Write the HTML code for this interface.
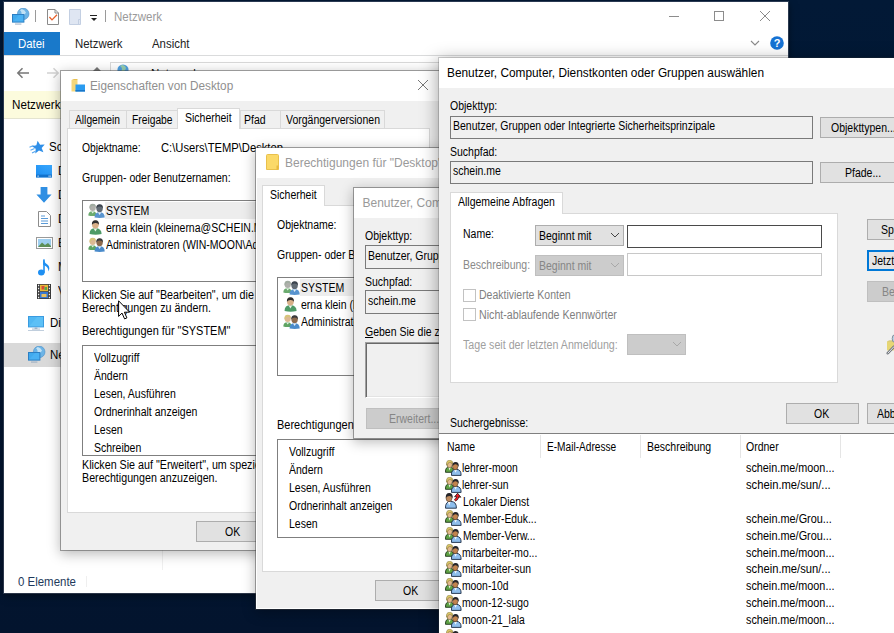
<!DOCTYPE html>
<html><head><meta charset="utf-8"><title>Netzwerk</title><style>
html,body{margin:0;padding:0}
body{width:894px;height:633px;overflow:hidden;position:relative;background:linear-gradient(180deg,#021936 0%,#03142e 100%);font-family:"Liberation Sans",sans-serif;}
.b{position:absolute;box-sizing:border-box;display:block}
.t{position:absolute;white-space:pre;transform-origin:0 0;}
</style></head><body>
<div class="b" style="left:4px;top:2px;width:784px;height:591px;background:#fff;box-shadow:0 0 0 1px rgba(120,130,150,.35),0 2px 8px rgba(0,0,0,.5);"></div>
<svg class="b" style="left:11.5px;top:7.5px;" width="18" height="17" viewBox="0 0 18 17">
<circle cx="11.2" cy="5.9" r="5.8" fill="#6db4e6"/>
<path d="M8 2.2 Q10.4 4.4 9.2 7 Q12.4 8.2 14 4.6 Q12.8 1.4 9.8 .9 Z" fill="#cfe9f7" opacity=".85"/>
<circle cx="11.2" cy="5.9" r="5.8" fill="none" stroke="#4a8fc8" stroke-width=".6"/>
<rect x=".5" y="6.5" width="11.4" height="7.6" fill="#49b1f3" stroke="#2c7fc4" stroke-width="1"/>
<path d="M1 13.6 L7 7 H1Z" fill="#3aa3ea" opacity=".6"/>
<rect x="3" y="15.6" width="6.4" height=".9" fill="#8fa6bd"/>
</svg>
<div class="b" style="left:35px;top:10px;width:1px;height:12px;background:#9a9a9a;"></div>
<svg class="b" style="left:46px;top:9px;" width="14" height="16" viewBox="0 0 14 16">
<path d="M1.5 .5 H9 L12.5 4 V15.5 H1.5 Z" fill="#fff" stroke="#8a8a8a" stroke-width="1"/>
<path d="M9 .5 V4 H12.5" fill="none" stroke="#8a8a8a" stroke-width="1"/>
<path d="M3.4 8 L6 10.9 L11 5.8" fill="none" stroke="#e8602a" stroke-width="1.3"/>
</svg>
<svg class="b" style="left:68px;top:9px;" width="14" height="16" viewBox="0 0 14 16">
<path d="M1.5 .5 H12.5 V15.5 H1.5 Z" fill="#dfe6f2" stroke="#c3cfe2" stroke-width="1"/>
<path d="M10.5 15 V10.5 H12.5" fill="none" stroke="#c3cfe2" stroke-width="1"/>
</svg>
<div class="b" style="left:90px;top:15px;width:7px;height:1px;background:#222;"></div>
<svg class="b" style="left:90px;top:17px;" width="8" height="5" viewBox="0 0 8 5"><path d="M1 1 H7 L4 4 Z" fill="#222"/></svg>
<div class="b" style="left:105px;top:10px;width:1px;height:12px;background:#9a9a9a;"></div>
<div class="t" style="left:113.5px;top:11.00px;font-size:12px;line-height:12px;color:#9a9a9a;transform:scaleX(0.96);">Netzwerk</div>
<div class="b" style="left:669px;top:16px;width:10px;height:1px;background:#8c8c8c;"></div>
<div class="b" style="left:714px;top:11px;width:10px;height:10px;border:1px solid #8c8c8c;"></div>
<svg class="b" style="left:759px;top:10px;" width="12" height="12" viewBox="0 0 12 12"><path d="M1 1 L11 11 M11 1 L1 11" stroke="#8a8a8a" stroke-width="1" fill="none"/></svg>
<div class="b" style="left:4px;top:32px;width:56px;height:23px;background:#1979ca;"></div>
<div class="t" style="left:18px;top:38.00px;font-size:12px;line-height:12px;color:#fff;transform:scaleX(0.95);">Datei</div>
<div class="t" style="left:74.5px;top:38.00px;font-size:12px;line-height:12px;color:#222;transform:scaleX(0.95);">Netzwerk</div>
<div class="t" style="left:151.5px;top:38.00px;font-size:12px;line-height:12px;color:#222;transform:scaleX(0.95);">Ansicht</div>
<svg class="b" style="left:750px;top:40px;" width="10" height="7" viewBox="0 0 10 7"><path d="M1 1 L5 5 L9 1" stroke="#8a8a8a" stroke-width="1.1" fill="none"/></svg>
<svg class="b" style="left:770px;top:36px;" width="14" height="14" viewBox="0 0 14 14"><circle cx="7" cy="7" r="6.8" fill="#1672d3"/><text x="7" y="11" font-family="Liberation Sans" font-weight="bold" font-size="11" fill="#fff" text-anchor="middle">?</text></svg>
<div class="b" style="left:4px;top:55px;width:784px;height:1px;background:#dadbdc;"></div>
<svg class="b" style="left:16px;top:67px;" width="14" height="12" viewBox="0 0 14 12"><path d="M13 6 H2 M6.5 1.2 L1.8 6 L6.5 10.8" stroke="#777" stroke-width="1.5" fill="none"/></svg>
<svg class="b" style="left:46px;top:67px;" width="14" height="12" viewBox="0 0 14 12"><path d="M1 6 H12 M7.5 1.2 L12.2 6 L7.5 10.8" stroke="#d2d2d2" stroke-width="1.5" fill="none"/></svg>
<div class="b" style="left:110px;top:62px;width:560px;height:23px;background:#fff;border:1px solid #d9d9d9;"></div>
<svg class="b" style="left:117px;top:64px;" width="12" height="12" viewBox="0 0 12 12"><circle cx="6" cy="6" r="5.6" fill="#4f9fe0"/><path d="M3 2 Q6 4 4.5 7 Q8 8 9 4 Q8 1 5 1Z" fill="#a8d8a0" opacity=".8"/></svg>
<div class="t" style="left:151px;top:68.00px;font-size:12px;line-height:12px;color:#000;transform:scaleX(0.96);">Netzwerk</div>
<svg class="b" style="left:92px;top:66px;" width="10" height="6" viewBox="0 0 10 6"><path d="M5 1 L9.5 5.5 H.5 Z" fill="#777"/></svg>
<div class="b" style="left:4px;top:91px;width:784px;height:27px;background:#fcfbdd;"></div>
<div class="b" style="left:4px;top:118px;width:784px;height:1px;background:#e4e4d0;"></div>
<div class="t" style="left:11.8px;top:99.00px;font-size:12px;line-height:12px;color:#000;transform:scaleX(0.97);">Netzwerk</div>
<div class="b" style="left:4px;top:343px;width:158px;height:23.6px;background:#d9d9d9;"></div>
<div class="b" style="left:162px;top:119px;width:1px;height:451px;background:#f0f0f0;"></div>
<svg class="b" style="left:29px;top:140px;" width="16" height="14" viewBox="0 0 16 14"><g transform="rotate(-8 9.5 7)"><path d="M9.5 .6 L11.4 5 L16 5.4 L12.5 8.4 L13.6 13 L9.5 10.5 L5.4 13 L6.5 8.4 L3 5.4 L7.6 5 Z" fill="#2f8fe8"/></g><path d="M.5 7.2 L4.5 5.6 M1.5 10.2 L5.5 8.6 M3 13 L6.5 11.2" stroke="#5aa9ef" stroke-width="1.1"/></svg>
<div class="t" style="left:49.3px;top:141.00px;font-size:12px;line-height:12px;color:#000;transform:scaleX(0.96);">Sc</div>
<svg class="b" style="left:36px;top:164.5px;" width="16" height="13" viewBox="0 0 16 13"><defs><linearGradient id="dg" x1="0" y1="1" x2="1" y2="0"><stop offset="0" stop-color="#1a8cf0"/><stop offset="1" stop-color="#3aa8ff"/></linearGradient></defs><rect x="0" y="0" width="16" height="12.4" fill="url(#dg)"/><rect x="0" y="9.6" width="16" height="2.8" fill="#1272cc"/><rect x="1.5" y="10.6" width="1.2" height="1" fill="#fff"/><rect x="12.5" y="10.6" width="1.2" height="1" fill="#fff"/><rect x="14.2" y="10.6" width="1" height="1" fill="#fff"/></svg>
<div class="t" style="left:57.7px;top:165.00px;font-size:12px;line-height:12px;color:#000;transform:scaleX(0.96);">D</div>
<svg class="b" style="left:36px;top:187px;" width="16" height="16" viewBox="0 0 16 16"><path d="M4.6 0 H11.4 V7.6 H15.6 L8 15.8 L.4 7.6 H4.6 Z" fill="#2f8fe3"/></svg>
<div class="t" style="left:58px;top:189.00px;font-size:12px;line-height:12px;color:#000;transform:scaleX(0.96);">D</div>
<svg class="b" style="left:38px;top:211px;" width="13" height="16" viewBox="0 0 13 16"><path d="M.5 .5 H8.5 L12.5 4.5 V15.5 H.5 Z" fill="#fff" stroke="#8c8c8c"/><path d="M3 5 H7 M3 7.5 H10 M3 10 H10 M3 12.5 H10" stroke="#5a9bd8" stroke-width="1"/></svg>
<div class="t" style="left:58px;top:213.00px;font-size:12px;line-height:12px;color:#000;transform:scaleX(0.96);">D</div>
<svg class="b" style="left:36px;top:237px;" width="17" height="12" viewBox="0 0 17 12"><rect x=".5" y=".5" width="16" height="11" fill="#fff" stroke="#9a9a9a"/><rect x="2" y="2" width="13" height="8" fill="#9ecff0"/><path d="M2 10 L6 5.5 L9 8 L12 6 L15 9 V10 Z" fill="#5d8f57"/></svg>
<div class="t" style="left:58px;top:237.00px;font-size:12px;line-height:12px;color:#000;transform:scaleX(0.96);">B</div>
<svg class="b" style="left:38px;top:258.5px;" width="12" height="17" viewBox="0 0 12 17"><ellipse cx="3.3" cy="13.5" rx="3.3" ry="2.9" fill="#1e8ff2"/><rect x="5.2" y=".4" width="1.6" height="13.4" fill="#1e8ff2"/><path d="M5.2 .4 Q7 4.2 10 6 Q12.4 8.6 10.4 12.6 Q10.6 8.4 6.6 6.6 L5.2 6 Z" fill="#1e8ff2"/></svg>
<div class="t" style="left:58px;top:261.00px;font-size:12px;line-height:12px;color:#000;transform:scaleX(0.96);">M</div>
<svg class="b" style="left:37px;top:284px;" width="14" height="15" viewBox="0 0 14 15"><rect x="0" y="0" width="14" height="15" fill="#3a3a3a"/><rect x="3" y=".8" width="8" height="6.4" fill="#e8b83a"/><rect x="3" y="7.8" width="8" height="6.4" fill="#3a78d0"/><rect x="4.5" y="2" width="3" height="3.5" fill="#d84a3a"/><rect x="7.5" y="3" width="2.5" height="3" fill="#5aa84a"/><rect x="4.5" y="10" width="5" height="3" fill="#e8c060"/><path d="M1 1.5h1.2M1 4.5h1.2M1 7.5h1.2M1 10.5h1.2M1 13.5h1.2M11.8 1.5h1.2M11.8 4.5h1.2M11.8 7.5h1.2M11.8 10.5h1.2M11.8 13.5h1.2" stroke="#f4f4f4" stroke-width="1.6"/></svg>
<div class="t" style="left:58px;top:285.00px;font-size:12px;line-height:12px;color:#000;transform:scaleX(0.96);">V</div>
<svg class="b" style="left:28px;top:316px;" width="16" height="15" viewBox="0 0 16 15"><rect x=".5" y=".5" width="15" height="10.4" fill="#5cc0f6" stroke="#3a9be0"/><path d="M1 10.4 L9 1 H1Z" fill="#49b2f2" opacity=".6"/><rect x="6.6" y="11.4" width="2.8" height="1.6" fill="#9fb3c8"/><rect x="4" y="12.6" width="8" height=".9" fill="#9fb3c8"/><rect x="0" y="14" width="16" height=".9" fill="#b9c9da"/></svg>
<div class="t" style="left:49.6px;top:317.00px;font-size:12px;line-height:12px;color:#000;transform:scaleX(0.96);">Di</div>
<svg class="b" style="left:28px;top:346.4px;" width="18" height="17" viewBox="0 0 18 17">
<circle cx="11.2" cy="5.9" r="5.8" fill="#6db4e6"/>
<path d="M8 2.2 Q10.4 4.4 9.2 7 Q12.4 8.2 14 4.6 Q12.8 1.4 9.8 .9 Z" fill="#cfe9f7" opacity=".85"/>
<circle cx="11.2" cy="5.9" r="5.8" fill="none" stroke="#4a8fc8" stroke-width=".6"/>
<rect x=".5" y="6.5" width="11.4" height="7.6" fill="#49b1f3" stroke="#2c7fc4" stroke-width="1"/>
<path d="M1 13.6 L7 7 H1Z" fill="#3aa3ea" opacity=".6"/>
<rect x="3" y="15.6" width="6.4" height=".9" fill="#8fa6bd"/>
</svg>
<div class="t" style="left:49.6px;top:349.00px;font-size:12px;line-height:12px;color:#000;transform:scaleX(0.96);">Ne</div>
<div class="t" style="left:18px;top:576.00px;font-size:12px;line-height:12px;color:#1e395b;transform:scaleX(0.955);">0 Elemente</div>
<div class="b" style="left:86px;top:576px;width:1px;height:11px;background:#efefef;"></div>
<div class="b" style="left:61px;top:71px;width:378px;height:479px;background:#f0f0f0;box-shadow:0 0 0 1px rgba(60,60,60,.46),0 3px 12px 1px rgba(0,0,0,.28);"></div>
<div class="b" style="left:61px;top:71px;width:378px;height:30px;background:#fff;"></div>
<svg class="b" style="left:71px;top:79px;" width="15" height="14" viewBox="0 0 15 14"><path d="M.5 1 H6.5 V12.5 H.5 Z" fill="#f5d77a"/><path d="M.5 1 L3 0 H6.5 V1Z" fill="#e8c050"/><rect x="4.5" y="5.5" width="9.5" height="7" fill="#2a9bf0"/><rect x="4.5" y="11" width="9.5" height="1.5" fill="#1976c8"/></svg>
<div class="t" style="left:90px;top:80.00px;font-size:12px;line-height:12px;color:#8f8f8f;transform:scaleX(0.98);">Eigenschaften von Desktop</div>
<svg class="b" style="left:417px;top:79px;" width="12" height="12" viewBox="0 0 12 12"><path d="M1 1 L11 11 M11 1 L1 11" stroke="#777" stroke-width="1" fill="none"/></svg>
<div class="b" style="left:67px;top:128px;width:363px;height:385px;background:#fff;border:1px solid #d9d9d9;"></div>
<div class="b" style="left:69px;top:110px;width:58px;height:19px;background:#f0f0f0;border:1px solid #d9d9d9;"></div>
<div class="t" style="left:75.2px;top:114.00px;font-size:12px;line-height:12px;color:#000;transform:scaleX(0.854);">Allgemein</div>
<div class="b" style="left:126px;top:110px;width:53px;height:19px;background:#f0f0f0;border:1px solid #d9d9d9;"></div>
<div class="t" style="left:132.3px;top:114.00px;font-size:12px;line-height:12px;color:#000;transform:scaleX(0.8552);">Freigabe</div>
<div class="b" style="left:240px;top:110px;width:41px;height:19px;background:#f0f0f0;border:1px solid #d9d9d9;"></div>
<div class="t" style="left:244.2px;top:114.00px;font-size:12px;line-height:12px;color:#000;transform:scaleX(0.875);">Pfad</div>
<div class="b" style="left:280px;top:110px;width:105px;height:19px;background:#f0f0f0;border:1px solid #d9d9d9;"></div>
<div class="t" style="left:286px;top:114.00px;font-size:12px;line-height:12px;color:#000;transform:scaleX(0.875);">Vorgängerversionen</div>
<div class="b" style="left:177px;top:108px;width:63px;height:21px;background:#fff;border:1px solid #d9d9d9;border-bottom:none;"></div>
<div class="t" style="left:185.3px;top:112.00px;font-size:12px;line-height:12px;color:#000;transform:scaleX(0.8733);">Sicherheit</div>
<div class="t" style="left:81.7px;top:142.00px;font-size:12px;line-height:12px;color:#000;transform:scaleX(0.8613);">Objektname:</div>
<div class="t" style="left:160.7px;top:142.00px;font-size:12px;line-height:12px;color:#000;transform:scaleX(0.9327);">C:\Users\TEMP\Desktop</div>
<div class="t" style="left:81.7px;top:172.00px;font-size:12px;line-height:12px;color:#000;transform:scaleX(0.877);">Gruppen- oder Benutzernamen:</div>
<div class="b" style="left:82px;top:200px;width:300px;height:82px;background:#fff;border:1px solid #7f7f7f;"></div>
<div class="b" style="left:105px;top:202px;width:276px;height:17px;background:#ededed;"></div>
<div class="t" style="left:106px;top:205.00px;font-size:12px;line-height:12px;color:#000;transform:scaleX(0.875);">SYSTEM</div>
<div class="t" style="left:106px;top:222.00px;font-size:12px;line-height:12px;color:#000;transform:scaleX(0.875);">erna klein (kleinerna@SCHEIN.ME)</div>
<div class="t" style="left:106px;top:239.00px;font-size:12px;line-height:12px;color:#000;transform:scaleX(0.875);">Administratoren (WIN-MOON\Administratoren)</div>
<div class="t" style="left:81.7px;top:289.00px;font-size:12px;line-height:12px;color:#000;transform:scaleX(0.8955);">Klicken Sie auf "Bearbeiten", um die</div>
<div class="t" style="left:81.7px;top:302.00px;font-size:12px;line-height:12px;color:#000;transform:scaleX(0.8945);">Berechtigungen zu ändern.</div>
<div class="t" style="left:81.7px;top:325.00px;font-size:12px;line-height:12px;color:#000;transform:scaleX(0.9127);">Berechtigungen für "SYSTEM"</div>
<div class="b" style="left:82px;top:345px;width:300px;height:111px;background:#fff;border:1px solid #7f7f7f;"></div>
<div class="t" style="left:93.7px;top:352.00px;font-size:12px;line-height:12px;color:#000;transform:scaleX(0.875);">Vollzugriff</div>
<div class="t" style="left:93.7px;top:370.00px;font-size:12px;line-height:12px;color:#000;transform:scaleX(0.875);">Ändern</div>
<div class="t" style="left:93.7px;top:388.00px;font-size:12px;line-height:12px;color:#000;transform:scaleX(0.875);">Lesen, Ausführen</div>
<div class="t" style="left:93.7px;top:406.00px;font-size:12px;line-height:12px;color:#000;transform:scaleX(0.875);">Ordnerinhalt anzeigen</div>
<div class="t" style="left:93.7px;top:424.00px;font-size:12px;line-height:12px;color:#000;transform:scaleX(0.875);">Lesen</div>
<div class="t" style="left:93.7px;top:442.00px;font-size:12px;line-height:12px;color:#000;transform:scaleX(0.875);">Schreiben</div>
<div class="t" style="left:81.7px;top:459.00px;font-size:12px;line-height:12px;color:#000;transform:scaleX(0.8944);">Klicken Sie auf "Erweitert", um spezielle</div>
<div class="t" style="left:81.7px;top:472.00px;font-size:12px;line-height:12px;color:#000;transform:scaleX(0.8908);">Berechtigungen anzuzeigen.</div>
<div class="b" style="left:196px;top:521px;width:75px;height:21px;background:#e1e1e1;border:1px solid #adadad;"></div>
<div class="t" style="left:224.5px;top:526.00px;font-size:12px;line-height:12px;color:#000;transform:scaleX(0.875);">OK</div>
<svg class="b" style="left:87.6px;top:202.6px;" width="17" height="15" viewBox="0 0 17 15"><g opacity="0.92">
<path d="M.3 12.6 Q.3 8.2 4.6 8.2 Q8.4 8.2 8.6 12.6 Q4.5 13.6 .3 12.6Z" fill="#5fa463"/>
<path d="M3.2 8.4 L4.7 10.6 L6.2 8.4Z" fill="#e8f3e8"/>
<ellipse cx="4.7" cy="4.6" rx="3.1" ry="3.5" fill="#a9aaa4"/>
<path d="M1.5 5 Q1.2 .8 4.7 .8 Q8 .8 7.9 4.2 Q6.5 2.6 4.3 3 Q2.4 3.3 2.2 6 Z" fill="#9aa59a"/>
<path d="M6.6 14.6 Q6.4 9.2 11.6 9.2 Q16.7 9.2 16.7 14.6 Q11.6 15.4 6.6 14.6Z" fill="#4a8bcb"/>
<path d="M10 9.4 L11.6 12 L13.2 9.4Z" fill="#e6eef8"/>
<ellipse cx="11.6" cy="5.4" rx="3.2" ry="3.7" fill="#55606a"/>
<path d="M8.3 5.6 Q8 1.3 11.7 1.3 Q15.2 1.3 14.9 5.6 Q14 3.6 11.7 3.6 Q9.4 3.6 8.3 5.6Z" fill="#2c3540"/>
</g></svg>
<svg class="b" style="left:89.4px;top:219.6px;" width="14" height="15" viewBox="0 0 14 15">
<path d="M.6 14 Q.4 8.2 6.4 8.2 Q12.6 8.2 12.6 14 Q6.6 15.3 .6 14Z" fill="#4e9a66"/>
<path d="M4.6 8.5 L6.4 11.4 L8.2 8.5Z" fill="#e8f3ea"/>
<ellipse cx="6.4" cy="4.5" rx="3.4" ry="3.9" fill="#d8af88"/>
<path d="M2.9 4.8 Q2.6 .3 6.5 .3 Q10.2 .3 9.9 4.8 Q9 2.9 6.4 3.1 Q4 3.2 2.9 4.8Z" fill="#2e2e30"/>
</svg>
<svg class="b" style="left:87.6px;top:236.6px;" width="17" height="15" viewBox="0 0 17 15"><g opacity="1.0">
<path d="M.3 12.6 Q.3 8.2 4.6 8.2 Q8.4 8.2 8.6 12.6 Q4.5 13.6 .3 12.6Z" fill="#5fa463"/>
<path d="M3.2 8.4 L4.7 10.6 L6.2 8.4Z" fill="#e8f3e8"/>
<ellipse cx="4.7" cy="4.6" rx="3.1" ry="3.5" fill="#dcb993"/>
<path d="M1.5 5 Q1.2 .8 4.7 .8 Q8 .8 7.9 4.2 Q6.5 2.6 4.3 3 Q2.4 3.3 2.2 6 Z" fill="#d6c47c"/>
<path d="M6.6 14.6 Q6.4 9.2 11.6 9.2 Q16.7 9.2 16.7 14.6 Q11.6 15.4 6.6 14.6Z" fill="#4a8bcb"/>
<path d="M10 9.4 L11.6 12 L13.2 9.4Z" fill="#e6eef8"/>
<ellipse cx="11.6" cy="5.4" rx="3.2" ry="3.7" fill="#8d6a4d"/>
<path d="M8.3 5.6 Q8 1.3 11.7 1.3 Q15.2 1.3 14.9 5.6 Q14 3.6 11.7 3.6 Q9.4 3.6 8.3 5.6Z" fill="#3b3b3d"/>
</g></svg>
<svg class="b" style="left:118px;top:299.6px;" width="14" height="21" viewBox="0 0 14 21"><path d="M.6 .8 V16.4 L4 13.1 L6.6 18.9 L8.9 17.9 L6.4 12.2 H11.6 Z" fill="#fff" stroke="#000" stroke-width="1"/></svg>
<div class="b" style="left:256px;top:148px;width:370px;height:461px;background:#f0f0f0;box-shadow:0 0 0 1px rgba(60,60,60,.46),0 3px 12px 1px rgba(0,0,0,.28);border:1px solid #fff;"></div>
<div class="b" style="left:256px;top:148px;width:370px;height:30px;background:#fff;"></div>
<svg class="b" style="left:266px;top:154px;" width="14" height="17" viewBox="0 0 14 17"><path d="M.5 1.5 Q.5 .5 1.5 .5 H11.5 Q12.5 .5 12.5 1.5 V15.5 H.5 Z" fill="#fbd968" stroke="#e9c04c" stroke-width="1"/><rect x="10.5" y="11.5" width="2" height="4" fill="#e9b93c"/></svg>
<div class="t" style="left:285px;top:157.00px;font-size:12px;line-height:12px;color:#9a9a9a;">Berechtigungen für "Desktop"</div>
<div class="b" style="left:262px;top:205px;width:362px;height:367px;background:#fff;border:1px solid #d9d9d9;"></div>
<div class="b" style="left:262px;top:185px;width:63px;height:21px;background:#fff;border:1px solid #d9d9d9;border-bottom:none;"></div>
<div class="t" style="left:270.4px;top:189.00px;font-size:12px;line-height:12px;color:#000;transform:scaleX(0.875);">Sicherheit</div>
<div class="t" style="left:276.7px;top:219.00px;font-size:12px;line-height:12px;color:#000;transform:scaleX(0.875);">Objektname:</div>
<div class="t" style="left:276.7px;top:249.00px;font-size:12px;line-height:12px;color:#000;transform:scaleX(0.877);">Gruppen- oder Benutzernamen:</div>
<div class="b" style="left:277px;top:277px;width:300px;height:99px;background:#fff;border:1px solid #7f7f7f;"></div>
<div class="b" style="left:300px;top:279px;width:276px;height:17px;background:#ededed;"></div>
<div class="t" style="left:301.2px;top:282.00px;font-size:12px;line-height:12px;color:#000;transform:scaleX(0.875);">SYSTEM</div>
<div class="t" style="left:301.2px;top:299.00px;font-size:12px;line-height:12px;color:#000;transform:scaleX(0.875);">erna klein (kleinerna@SCHEIN.ME)</div>
<div class="t" style="left:301.2px;top:316.00px;font-size:12px;line-height:12px;color:#000;transform:scaleX(0.875);">Administratoren (WIN-MOON\Administratoren)</div>
<div class="t" style="left:277.2px;top:419.00px;font-size:12px;line-height:12px;color:#000;transform:scaleX(0.9127);">Berechtigungen für "SYSTEM"</div>
<div class="b" style="left:277px;top:439px;width:300px;height:99px;background:#fff;border:1px solid #7f7f7f;"></div>
<div class="t" style="left:289px;top:446.00px;font-size:12px;line-height:12px;color:#000;transform:scaleX(0.875);">Vollzugriff</div>
<div class="t" style="left:289px;top:464.00px;font-size:12px;line-height:12px;color:#000;transform:scaleX(0.875);">Ändern</div>
<div class="t" style="left:289px;top:482.00px;font-size:12px;line-height:12px;color:#000;transform:scaleX(0.875);">Lesen, Ausführen</div>
<div class="t" style="left:289px;top:500.00px;font-size:12px;line-height:12px;color:#000;transform:scaleX(0.875);">Ordnerinhalt anzeigen</div>
<div class="t" style="left:289px;top:518.00px;font-size:12px;line-height:12px;color:#000;transform:scaleX(0.875);">Lesen</div>
<div class="b" style="left:375px;top:580px;width:75px;height:21px;background:#e1e1e1;border:1px solid #adadad;"></div>
<div class="t" style="left:403.3px;top:585.00px;font-size:12px;line-height:12px;color:#000;transform:scaleX(0.875);">OK</div>
<svg class="b" style="left:282.6px;top:279.6px;" width="17" height="15" viewBox="0 0 17 15"><g opacity="0.92">
<path d="M.3 12.6 Q.3 8.2 4.6 8.2 Q8.4 8.2 8.6 12.6 Q4.5 13.6 .3 12.6Z" fill="#5fa463"/>
<path d="M3.2 8.4 L4.7 10.6 L6.2 8.4Z" fill="#e8f3e8"/>
<ellipse cx="4.7" cy="4.6" rx="3.1" ry="3.5" fill="#a9aaa4"/>
<path d="M1.5 5 Q1.2 .8 4.7 .8 Q8 .8 7.9 4.2 Q6.5 2.6 4.3 3 Q2.4 3.3 2.2 6 Z" fill="#9aa59a"/>
<path d="M6.6 14.6 Q6.4 9.2 11.6 9.2 Q16.7 9.2 16.7 14.6 Q11.6 15.4 6.6 14.6Z" fill="#4a8bcb"/>
<path d="M10 9.4 L11.6 12 L13.2 9.4Z" fill="#e6eef8"/>
<ellipse cx="11.6" cy="5.4" rx="3.2" ry="3.7" fill="#55606a"/>
<path d="M8.3 5.6 Q8 1.3 11.7 1.3 Q15.2 1.3 14.9 5.6 Q14 3.6 11.7 3.6 Q9.4 3.6 8.3 5.6Z" fill="#2c3540"/>
</g></svg>
<svg class="b" style="left:284.4px;top:296.6px;" width="14" height="15" viewBox="0 0 14 15">
<path d="M.6 14 Q.4 8.2 6.4 8.2 Q12.6 8.2 12.6 14 Q6.6 15.3 .6 14Z" fill="#4e9a66"/>
<path d="M4.6 8.5 L6.4 11.4 L8.2 8.5Z" fill="#e8f3ea"/>
<ellipse cx="6.4" cy="4.5" rx="3.4" ry="3.9" fill="#d8af88"/>
<path d="M2.9 4.8 Q2.6 .3 6.5 .3 Q10.2 .3 9.9 4.8 Q9 2.9 6.4 3.1 Q4 3.2 2.9 4.8Z" fill="#2e2e30"/>
</svg>
<svg class="b" style="left:282.6px;top:313.6px;" width="17" height="15" viewBox="0 0 17 15"><g opacity="1.0">
<path d="M.3 12.6 Q.3 8.2 4.6 8.2 Q8.4 8.2 8.6 12.6 Q4.5 13.6 .3 12.6Z" fill="#5fa463"/>
<path d="M3.2 8.4 L4.7 10.6 L6.2 8.4Z" fill="#e8f3e8"/>
<ellipse cx="4.7" cy="4.6" rx="3.1" ry="3.5" fill="#dcb993"/>
<path d="M1.5 5 Q1.2 .8 4.7 .8 Q8 .8 7.9 4.2 Q6.5 2.6 4.3 3 Q2.4 3.3 2.2 6 Z" fill="#d6c47c"/>
<path d="M6.6 14.6 Q6.4 9.2 11.6 9.2 Q16.7 9.2 16.7 14.6 Q11.6 15.4 6.6 14.6Z" fill="#4a8bcb"/>
<path d="M10 9.4 L11.6 12 L13.2 9.4Z" fill="#e6eef8"/>
<ellipse cx="11.6" cy="5.4" rx="3.2" ry="3.7" fill="#8d6a4d"/>
<path d="M8.3 5.6 Q8 1.3 11.7 1.3 Q15.2 1.3 14.9 5.6 Q14 3.6 11.7 3.6 Q9.4 3.6 8.3 5.6Z" fill="#3b3b3d"/>
</g></svg>
<div class="b" style="left:354px;top:188px;width:300px;height:250px;background:#f0f0f0;box-shadow:0 0 0 1px rgba(60,60,60,.46),0 3px 12px 1px rgba(0,0,0,.28);"></div>
<div class="b" style="left:354px;top:188px;width:300px;height:30px;background:#fff;"></div>
<div class="t" style="left:362.5px;top:197.00px;font-size:12px;line-height:12px;color:#9a9a9a;">Benutzer, Computer, Dienstkonten</div>
<div class="t" style="left:364.8px;top:230.00px;font-size:12px;line-height:12px;color:#000;transform:scaleX(0.875);">Objekttyp:</div>
<div class="b" style="left:365px;top:245px;width:200px;height:24px;background:#f0f0f0;border:1px solid #7a7a7a;"></div>
<div class="t" style="left:368.2px;top:250.00px;font-size:12px;line-height:12px;color:#000;transform:scaleX(0.875);">Benutzer, Gruppen oder</div>
<div class="t" style="left:364.8px;top:276.00px;font-size:12px;line-height:12px;color:#000;transform:scaleX(0.875);">Suchpfad:</div>
<div class="b" style="left:365px;top:290px;width:200px;height:24px;background:#f0f0f0;border:1px solid #7a7a7a;"></div>
<div class="t" style="left:368.2px;top:295.00px;font-size:12px;line-height:12px;color:#000;transform:scaleX(0.875);">schein.me</div>
<div class="t" style="left:364.9px;top:326.00px;font-size:12px;line-height:12px;color:#000;transform:scaleX(0.875);"><u>G</u>eben Sie die zu verwendenden</div>
<div class="b" style="left:365px;top:342px;width:200px;height:56px;background:#f0f0f0;border:1px solid #a0a0a0;border-right-color:#fff;border-bottom-color:#fff;box-shadow:inset 1px 1px 0 #696969,inset -1px -1px 0 #e3e3e3;"></div>
<div class="b" style="left:366px;top:408px;width:90px;height:21px;background:#cccccc;border:1px solid #bfbfbf;"></div>
<div class="t" style="left:389.4px;top:413.00px;font-size:12px;line-height:12px;color:#868686;transform:scaleX(0.875);">Erweitert...</div>
<div class="b" style="left:439px;top:58px;width:470px;height:590px;background:#f0f0f0;box-shadow:0 0 0 1px rgba(60,60,60,.22),0 4px 16px 2px rgba(0,0,0,.34);"></div>
<div class="b" style="left:439px;top:58px;width:470px;height:30px;background:#fff;"></div>
<div class="t" style="left:447.3px;top:67.00px;font-size:12px;line-height:12px;color:#000;transform:scaleX(0.988);">Benutzer, Computer, Dienstkonten oder Gruppen auswählen</div>
<div class="t" style="left:449.8px;top:100.00px;font-size:12px;line-height:12px;color:#000;transform:scaleX(0.875);">Objekttyp:</div>
<div class="b" style="left:450px;top:116px;width:363px;height:23px;background:#f0f0f0;border:1px solid #7a7a7a;"></div>
<div class="t" style="left:453px;top:120.00px;font-size:12px;line-height:12px;color:#000;transform:scaleX(0.875);">Benutzer, Gruppen oder Integrierte Sicherheitsprinzipale</div>
<div class="b" style="left:820px;top:117px;width:90px;height:21px;background:#e1e1e1;border:1px solid #adadad;"></div>
<div class="t" style="left:831px;top:122.00px;font-size:12px;line-height:12px;color:#000;transform:scaleX(0.875);">Objekttypen...</div>
<div class="t" style="left:449.8px;top:146.00px;font-size:12px;line-height:12px;color:#000;transform:scaleX(0.875);">Suchpfad:</div>
<div class="b" style="left:450px;top:161px;width:363px;height:23px;background:#f0f0f0;border:1px solid #7a7a7a;"></div>
<div class="t" style="left:453px;top:165.00px;font-size:12px;line-height:12px;color:#000;transform:scaleX(0.875);">schein.me</div>
<div class="b" style="left:820px;top:162px;width:75px;height:21px;background:#e1e1e1;border:1px solid #adadad;"></div>
<div class="t" style="left:845px;top:167.00px;font-size:12px;line-height:12px;color:#000;transform:scaleX(0.875);">Pfade...</div>
<div class="b" style="left:450px;top:213px;width:388px;height:170px;background:#fff;border:1px solid #d9d9d9;"></div>
<div class="b" style="left:450px;top:192px;width:113px;height:22px;background:#fff;border:1px solid #d9d9d9;border-bottom:none;"></div>
<div class="t" style="left:458px;top:196.00px;font-size:12px;line-height:12px;color:#000;transform:scaleX(0.875);">Allgemeine Abfragen</div>
<div class="t" style="left:463.4px;top:228.00px;font-size:12px;line-height:12px;color:#000;transform:scaleX(0.875);">Name:</div>
<div class="b" style="left:535px;top:225px;width:89px;height:21px;background:#e1e1e1;border:1px solid #adadad;"></div>
<div class="t" style="left:539px;top:230.00px;font-size:12px;line-height:12px;color:#000;transform:scaleX(0.875);">Beginnt mit</div>
<svg class="b" style="left:610px;top:232px;" width="10" height="7" viewBox="0 0 10 7"><path d="M1 1 L5 5 L9 1" stroke="#444" stroke-width="1" fill="none"/></svg>
<div class="b" style="left:627px;top:225px;width:195px;height:23px;background:#fff;border:1px solid #4a4a4a;"></div>
<div class="t" style="left:463.4px;top:259.00px;font-size:12px;line-height:12px;color:#8a8a8a;transform:scaleX(0.875);">Beschreibung:</div>
<div class="b" style="left:535px;top:255px;width:89px;height:21px;background:#cccccc;border:1px solid #bfbfbf;"></div>
<div class="t" style="left:539px;top:260.00px;font-size:12px;line-height:12px;color:#868686;transform:scaleX(0.875);">Beginnt mit</div>
<svg class="b" style="left:610px;top:262px;" width="10" height="7" viewBox="0 0 10 7"><path d="M1 1 L5 5 L9 1" stroke="#a8a8a8" stroke-width="1" fill="none"/></svg>
<div class="b" style="left:627px;top:253px;width:195px;height:23px;background:#fff;border:1px solid #c8c8c8;"></div>
<div class="b" style="left:463px;top:289px;width:13px;height:13px;background:#fff;border:1px solid #c2c2c2;"></div>
<div class="t" style="left:479px;top:289.00px;font-size:12px;line-height:12px;color:#808080;transform:scaleX(0.875);">Deaktivierte Konten</div>
<div class="b" style="left:463px;top:308px;width:13px;height:13px;background:#fff;border:1px solid #c2c2c2;"></div>
<div class="t" style="left:479px;top:309.00px;font-size:12px;line-height:12px;color:#808080;transform:scaleX(0.8873);">Nicht-ablaufende Kennwörter</div>
<div class="t" style="left:463.4px;top:339.00px;font-size:12px;line-height:12px;color:#a0a0a0;transform:scaleX(0.8885);">Tage seit der letzten Anmeldung:</div>
<div class="b" style="left:627px;top:334px;width:59px;height:21px;background:#cccccc;border:1px solid #bfbfbf;"></div>
<svg class="b" style="left:672px;top:341px;" width="10" height="7" viewBox="0 0 10 7"><path d="M1 1 L5 5 L9 1" stroke="#a8a8a8" stroke-width="1" fill="none"/></svg>
<div class="b" style="left:867px;top:219px;width:60px;height:21px;background:#e1e1e1;border:1px solid #adadad;"></div>
<div class="t" style="left:880.8px;top:224.00px;font-size:12px;line-height:12px;color:#000;transform:scaleX(0.875);">Spalten...</div>
<div class="b" style="left:867px;top:250px;width:60px;height:21px;background:#e5e5e5;border:2px solid #0078d7;"></div>
<div class="t" style="left:872px;top:255.00px;font-size:12px;line-height:12px;color:#000;transform:scaleX(0.875);">Jetzt suchen</div>
<div class="b" style="left:867px;top:281px;width:60px;height:21px;background:#cccccc;border:1px solid #bfbfbf;"></div>
<div class="t" style="left:882px;top:286.00px;font-size:12px;line-height:12px;color:#868686;transform:scaleX(0.875);">Beenden</div>
<svg class="b" style="left:886px;top:334px;" width="8" height="22" viewBox="0 0 8 22"><rect x="1" y="7.4" width="7" height="9" fill="#e6d674"/><path d="M1 7.4 L3 6.4 H8 V7.4Z" fill="#c9b850"/><ellipse cx="8.6" cy="4.6" rx="2.4" ry="3.8" fill="#b9d3e6" stroke="#7d8894" stroke-width=".9"/><path d="M1.8 19.2 L8 12.6" stroke="#70757c" stroke-width="2.6" stroke-linecap="round"/><path d="M2 19 L8 12.6" stroke="#e8eaec" stroke-width="1" stroke-linecap="round"/></svg>
<div class="b" style="left:786px;top:403px;width:73px;height:21px;background:#e1e1e1;border:1px solid #adadad;"></div>
<div class="t" style="left:814.3px;top:408.00px;font-size:12px;line-height:12px;color:#000;transform:scaleX(0.875);">OK</div>
<div class="b" style="left:867px;top:403px;width:72px;height:21px;background:#e1e1e1;border:1px solid #adadad;"></div>
<div class="t" style="left:876.8px;top:408.00px;font-size:12px;line-height:12px;color:#000;transform:scaleX(0.875);">Abbrechen</div>
<div class="t" style="left:450px;top:417.00px;font-size:12px;line-height:12px;color:#000;transform:scaleX(0.875);">Suchergebnisse:</div>
<div class="b" style="left:439px;top:433px;width:470px;height:210px;background:#fff;border-top:1px solid #7f7f7f;"></div>
<div class="b" style="left:540px;top:435px;width:1px;height:23px;background:#e5e5e5;"></div>
<div class="b" style="left:640px;top:435px;width:1px;height:23px;background:#e5e5e5;"></div>
<div class="b" style="left:740px;top:435px;width:1px;height:23px;background:#e5e5e5;"></div>
<div class="b" style="left:840px;top:435px;width:1px;height:23px;background:#e5e5e5;"></div>
<div class="t" style="left:447px;top:441.00px;font-size:12px;line-height:12px;color:#000;transform:scaleX(0.875);">Name</div>
<div class="t" style="left:547.2px;top:441.00px;font-size:12px;line-height:12px;color:#000;transform:scaleX(0.8437);">E-Mail-Adresse</div>
<div class="t" style="left:646.7px;top:441.00px;font-size:12px;line-height:12px;color:#000;transform:scaleX(0.875);">Beschreibung</div>
<div class="t" style="left:746.2px;top:441.00px;font-size:12px;line-height:12px;color:#000;transform:scaleX(0.875);">Ordner</div>
<div class="t" style="left:462.3px;top:462.00px;font-size:12px;line-height:12px;color:#000;transform:scaleX(0.862);">lehrer-moon</div>
<div class="t" style="left:746.2px;top:462.00px;font-size:12px;line-height:12px;color:#000;transform:scaleX(0.9016);">schein.me/moon...</div>
<div class="t" style="left:462.3px;top:479.00px;font-size:12px;line-height:12px;color:#000;transform:scaleX(0.862);">lehrer-sun</div>
<div class="t" style="left:746.2px;top:479.00px;font-size:12px;line-height:12px;color:#000;transform:scaleX(0.9338);">schein.me/sun/...</div>
<div class="t" style="left:463.4px;top:496.00px;font-size:12px;line-height:12px;color:#000;transform:scaleX(0.862);">Lokaler Dienst</div>
<div class="t" style="left:463.4px;top:513.00px;font-size:12px;line-height:12px;color:#000;transform:scaleX(0.862);">Member-Eduk...</div>
<div class="t" style="left:746.2px;top:513.00px;font-size:12px;line-height:12px;color:#000;transform:scaleX(0.907);">schein.me/Grou...</div>
<div class="t" style="left:463.4px;top:530.00px;font-size:12px;line-height:12px;color:#000;transform:scaleX(0.862);">Member-Verw...</div>
<div class="t" style="left:746.2px;top:530.00px;font-size:12px;line-height:12px;color:#000;transform:scaleX(0.907);">schein.me/Grou...</div>
<div class="t" style="left:462.3px;top:547.00px;font-size:12px;line-height:12px;color:#000;transform:scaleX(0.862);">mitarbeiter-mo...</div>
<div class="t" style="left:746.2px;top:547.00px;font-size:12px;line-height:12px;color:#000;transform:scaleX(0.9016);">schein.me/moon...</div>
<div class="t" style="left:462.3px;top:563.00px;font-size:12px;line-height:12px;color:#000;transform:scaleX(0.862);">mitarbeiter-sun</div>
<div class="t" style="left:746.2px;top:563.00px;font-size:12px;line-height:12px;color:#000;transform:scaleX(0.9338);">schein.me/sun/...</div>
<div class="t" style="left:462.3px;top:580.00px;font-size:12px;line-height:12px;color:#000;transform:scaleX(0.862);">moon-10d</div>
<div class="t" style="left:746.2px;top:580.00px;font-size:12px;line-height:12px;color:#000;transform:scaleX(0.9016);">schein.me/moon...</div>
<div class="t" style="left:462.3px;top:597.00px;font-size:12px;line-height:12px;color:#000;transform:scaleX(0.862);">moon-12-sugo</div>
<div class="t" style="left:746.2px;top:597.00px;font-size:12px;line-height:12px;color:#000;transform:scaleX(0.9016);">schein.me/moon...</div>
<div class="t" style="left:462.3px;top:614.00px;font-size:12px;line-height:12px;color:#000;transform:scaleX(0.862);">moon-21_lala</div>
<div class="t" style="left:746.2px;top:614.00px;font-size:12px;line-height:12px;color:#000;transform:scaleX(0.9016);">schein.me/moon...</div>
<svg class="b" style="left:445px;top:459.6px;" width="17" height="16" viewBox="0 0 17 16">
<path d="M.5 12.3 Q.3 6.8 4.4 6.8 Q8.7 6.8 8.7 12.3 Z" fill="#5fa345" stroke="#1c3518" stroke-width=".9"/>
<path d="M3.4 7.2 L4.6 10.6 L5.8 7.2Z" fill="#f0f6ea"/>
<ellipse cx="4.6" cy="4.4" rx="2.7" ry="3.2" fill="#e2b98c" stroke="#5a4a30" stroke-width=".5"/>
<path d="M1.5 5 Q1 .2 4.6 .2 Q8.2 .2 7.9 4.2 Q6.8 2.2 4.5 2.5 Q2.6 2.8 2.3 5.4 Z" fill="#d9c566" stroke="#6a5c28" stroke-width=".4"/>
<path d="M6.5 15.4 Q6 9.3 11.1 9.3 Q16.3 9.3 16.1 15.4 Z" fill="#8ebeec" stroke="#182a44" stroke-width=".9"/>
<path d="M9.3 9.7 L10.6 12.8 L11.9 9.7Z" fill="#f4f8fc"/>
<ellipse cx="10.2" cy="6.4" rx="2.7" ry="3.3" fill="#c2844e" stroke="#3a2818" stroke-width=".5"/>
<path d="M7.5 6.2 Q7.2 1.9 10.6 1.9 Q14.2 1.9 13.8 7 Q13.2 4.6 10.8 4.3 Q8.6 4.1 7.5 6.2Z" fill="#26262a"/>
</svg>
<svg class="b" style="left:445px;top:476.53000000000003px;" width="17" height="16" viewBox="0 0 17 16">
<path d="M.5 12.3 Q.3 6.8 4.4 6.8 Q8.7 6.8 8.7 12.3 Z" fill="#5fa345" stroke="#1c3518" stroke-width=".9"/>
<path d="M3.4 7.2 L4.6 10.6 L5.8 7.2Z" fill="#f0f6ea"/>
<ellipse cx="4.6" cy="4.4" rx="2.7" ry="3.2" fill="#e2b98c" stroke="#5a4a30" stroke-width=".5"/>
<path d="M1.5 5 Q1 .2 4.6 .2 Q8.2 .2 7.9 4.2 Q6.8 2.2 4.5 2.5 Q2.6 2.8 2.3 5.4 Z" fill="#d9c566" stroke="#6a5c28" stroke-width=".4"/>
<path d="M6.5 15.4 Q6 9.3 11.1 9.3 Q16.3 9.3 16.1 15.4 Z" fill="#8ebeec" stroke="#182a44" stroke-width=".9"/>
<path d="M9.3 9.7 L10.6 12.8 L11.9 9.7Z" fill="#f4f8fc"/>
<ellipse cx="10.2" cy="6.4" rx="2.7" ry="3.3" fill="#c2844e" stroke="#3a2818" stroke-width=".5"/>
<path d="M7.5 6.2 Q7.2 1.9 10.6 1.9 Q14.2 1.9 13.8 7 Q13.2 4.6 10.8 4.3 Q8.6 4.1 7.5 6.2Z" fill="#26262a"/>
</svg>
<svg class="b" style="left:445px;top:493.46000000000004px;" width="17" height="16" viewBox="0 0 17 16">
<path d="M.5 15.2 Q.2 8.4 5.6 8.4 Q11.6 8.4 11.4 15.2 Z" fill="#8ebeec" stroke="#182a44" stroke-width=".9"/>
<path d="M2.8 8.8 L4.2 12.4 L5.6 8.8Z" fill="#f4f8fc"/>
<ellipse cx="4" cy="5" rx="3" ry="3.7" fill="#bd8a5e" stroke="#3a2818" stroke-width=".5"/>
<path d="M.8 4.8 Q.5 .1 4.2 .1 Q8 .1 7.8 5.4 Q7 3 4.4 3 Q2 3 .8 4.8Z" fill="#26262a"/>
<path d="M9.8 7.4 Q13 5.6 12.6 3.2" fill="none" stroke="#111" stroke-width="2.6"/>
<path d="M9.6 3.8 L12.6 .2 L15.8 4.2 Z" fill="#ee1c25" stroke="#111" stroke-width=".8"/>
<path d="M9.8 7.4 Q13 5.6 12.6 3.2" fill="none" stroke="#ee1c25" stroke-width="1.5"/>
</svg>
<svg class="b" style="left:445px;top:510.39000000000004px;" width="17" height="16" viewBox="0 0 17 16">
<path d="M.5 12.3 Q.3 6.8 4.4 6.8 Q8.7 6.8 8.7 12.3 Z" fill="#5fa345" stroke="#1c3518" stroke-width=".9"/>
<path d="M3.4 7.2 L4.6 10.6 L5.8 7.2Z" fill="#f0f6ea"/>
<ellipse cx="4.6" cy="4.4" rx="2.7" ry="3.2" fill="#e2b98c" stroke="#5a4a30" stroke-width=".5"/>
<path d="M1.5 5 Q1 .2 4.6 .2 Q8.2 .2 7.9 4.2 Q6.8 2.2 4.5 2.5 Q2.6 2.8 2.3 5.4 Z" fill="#d9c566" stroke="#6a5c28" stroke-width=".4"/>
<path d="M6.5 15.4 Q6 9.3 11.1 9.3 Q16.3 9.3 16.1 15.4 Z" fill="#8ebeec" stroke="#182a44" stroke-width=".9"/>
<path d="M9.3 9.7 L10.6 12.8 L11.9 9.7Z" fill="#f4f8fc"/>
<ellipse cx="10.2" cy="6.4" rx="2.7" ry="3.3" fill="#c2844e" stroke="#3a2818" stroke-width=".5"/>
<path d="M7.5 6.2 Q7.2 1.9 10.6 1.9 Q14.2 1.9 13.8 7 Q13.2 4.6 10.8 4.3 Q8.6 4.1 7.5 6.2Z" fill="#26262a"/>
</svg>
<svg class="b" style="left:445px;top:527.32px;" width="17" height="16" viewBox="0 0 17 16">
<path d="M.5 12.3 Q.3 6.8 4.4 6.8 Q8.7 6.8 8.7 12.3 Z" fill="#5fa345" stroke="#1c3518" stroke-width=".9"/>
<path d="M3.4 7.2 L4.6 10.6 L5.8 7.2Z" fill="#f0f6ea"/>
<ellipse cx="4.6" cy="4.4" rx="2.7" ry="3.2" fill="#e2b98c" stroke="#5a4a30" stroke-width=".5"/>
<path d="M1.5 5 Q1 .2 4.6 .2 Q8.2 .2 7.9 4.2 Q6.8 2.2 4.5 2.5 Q2.6 2.8 2.3 5.4 Z" fill="#d9c566" stroke="#6a5c28" stroke-width=".4"/>
<path d="M6.5 15.4 Q6 9.3 11.1 9.3 Q16.3 9.3 16.1 15.4 Z" fill="#8ebeec" stroke="#182a44" stroke-width=".9"/>
<path d="M9.3 9.7 L10.6 12.8 L11.9 9.7Z" fill="#f4f8fc"/>
<ellipse cx="10.2" cy="6.4" rx="2.7" ry="3.3" fill="#c2844e" stroke="#3a2818" stroke-width=".5"/>
<path d="M7.5 6.2 Q7.2 1.9 10.6 1.9 Q14.2 1.9 13.8 7 Q13.2 4.6 10.8 4.3 Q8.6 4.1 7.5 6.2Z" fill="#26262a"/>
</svg>
<svg class="b" style="left:445px;top:544.25px;" width="17" height="16" viewBox="0 0 17 16">
<path d="M.5 12.3 Q.3 6.8 4.4 6.8 Q8.7 6.8 8.7 12.3 Z" fill="#5fa345" stroke="#1c3518" stroke-width=".9"/>
<path d="M3.4 7.2 L4.6 10.6 L5.8 7.2Z" fill="#f0f6ea"/>
<ellipse cx="4.6" cy="4.4" rx="2.7" ry="3.2" fill="#e2b98c" stroke="#5a4a30" stroke-width=".5"/>
<path d="M1.5 5 Q1 .2 4.6 .2 Q8.2 .2 7.9 4.2 Q6.8 2.2 4.5 2.5 Q2.6 2.8 2.3 5.4 Z" fill="#d9c566" stroke="#6a5c28" stroke-width=".4"/>
<path d="M6.5 15.4 Q6 9.3 11.1 9.3 Q16.3 9.3 16.1 15.4 Z" fill="#8ebeec" stroke="#182a44" stroke-width=".9"/>
<path d="M9.3 9.7 L10.6 12.8 L11.9 9.7Z" fill="#f4f8fc"/>
<ellipse cx="10.2" cy="6.4" rx="2.7" ry="3.3" fill="#c2844e" stroke="#3a2818" stroke-width=".5"/>
<path d="M7.5 6.2 Q7.2 1.9 10.6 1.9 Q14.2 1.9 13.8 7 Q13.2 4.6 10.8 4.3 Q8.6 4.1 7.5 6.2Z" fill="#26262a"/>
</svg>
<svg class="b" style="left:445px;top:561.1800000000001px;" width="17" height="16" viewBox="0 0 17 16">
<path d="M.5 12.3 Q.3 6.8 4.4 6.8 Q8.7 6.8 8.7 12.3 Z" fill="#5fa345" stroke="#1c3518" stroke-width=".9"/>
<path d="M3.4 7.2 L4.6 10.6 L5.8 7.2Z" fill="#f0f6ea"/>
<ellipse cx="4.6" cy="4.4" rx="2.7" ry="3.2" fill="#e2b98c" stroke="#5a4a30" stroke-width=".5"/>
<path d="M1.5 5 Q1 .2 4.6 .2 Q8.2 .2 7.9 4.2 Q6.8 2.2 4.5 2.5 Q2.6 2.8 2.3 5.4 Z" fill="#d9c566" stroke="#6a5c28" stroke-width=".4"/>
<path d="M6.5 15.4 Q6 9.3 11.1 9.3 Q16.3 9.3 16.1 15.4 Z" fill="#8ebeec" stroke="#182a44" stroke-width=".9"/>
<path d="M9.3 9.7 L10.6 12.8 L11.9 9.7Z" fill="#f4f8fc"/>
<ellipse cx="10.2" cy="6.4" rx="2.7" ry="3.3" fill="#c2844e" stroke="#3a2818" stroke-width=".5"/>
<path d="M7.5 6.2 Q7.2 1.9 10.6 1.9 Q14.2 1.9 13.8 7 Q13.2 4.6 10.8 4.3 Q8.6 4.1 7.5 6.2Z" fill="#26262a"/>
</svg>
<svg class="b" style="left:445px;top:578.11px;" width="17" height="16" viewBox="0 0 17 16">
<path d="M.5 12.3 Q.3 6.8 4.4 6.8 Q8.7 6.8 8.7 12.3 Z" fill="#5fa345" stroke="#1c3518" stroke-width=".9"/>
<path d="M3.4 7.2 L4.6 10.6 L5.8 7.2Z" fill="#f0f6ea"/>
<ellipse cx="4.6" cy="4.4" rx="2.7" ry="3.2" fill="#e2b98c" stroke="#5a4a30" stroke-width=".5"/>
<path d="M1.5 5 Q1 .2 4.6 .2 Q8.2 .2 7.9 4.2 Q6.8 2.2 4.5 2.5 Q2.6 2.8 2.3 5.4 Z" fill="#d9c566" stroke="#6a5c28" stroke-width=".4"/>
<path d="M6.5 15.4 Q6 9.3 11.1 9.3 Q16.3 9.3 16.1 15.4 Z" fill="#8ebeec" stroke="#182a44" stroke-width=".9"/>
<path d="M9.3 9.7 L10.6 12.8 L11.9 9.7Z" fill="#f4f8fc"/>
<ellipse cx="10.2" cy="6.4" rx="2.7" ry="3.3" fill="#c2844e" stroke="#3a2818" stroke-width=".5"/>
<path d="M7.5 6.2 Q7.2 1.9 10.6 1.9 Q14.2 1.9 13.8 7 Q13.2 4.6 10.8 4.3 Q8.6 4.1 7.5 6.2Z" fill="#26262a"/>
</svg>
<svg class="b" style="left:445px;top:595.04px;" width="17" height="16" viewBox="0 0 17 16">
<path d="M.5 12.3 Q.3 6.8 4.4 6.8 Q8.7 6.8 8.7 12.3 Z" fill="#5fa345" stroke="#1c3518" stroke-width=".9"/>
<path d="M3.4 7.2 L4.6 10.6 L5.8 7.2Z" fill="#f0f6ea"/>
<ellipse cx="4.6" cy="4.4" rx="2.7" ry="3.2" fill="#e2b98c" stroke="#5a4a30" stroke-width=".5"/>
<path d="M1.5 5 Q1 .2 4.6 .2 Q8.2 .2 7.9 4.2 Q6.8 2.2 4.5 2.5 Q2.6 2.8 2.3 5.4 Z" fill="#d9c566" stroke="#6a5c28" stroke-width=".4"/>
<path d="M6.5 15.4 Q6 9.3 11.1 9.3 Q16.3 9.3 16.1 15.4 Z" fill="#8ebeec" stroke="#182a44" stroke-width=".9"/>
<path d="M9.3 9.7 L10.6 12.8 L11.9 9.7Z" fill="#f4f8fc"/>
<ellipse cx="10.2" cy="6.4" rx="2.7" ry="3.3" fill="#c2844e" stroke="#3a2818" stroke-width=".5"/>
<path d="M7.5 6.2 Q7.2 1.9 10.6 1.9 Q14.2 1.9 13.8 7 Q13.2 4.6 10.8 4.3 Q8.6 4.1 7.5 6.2Z" fill="#26262a"/>
</svg>
<svg class="b" style="left:445px;top:611.97px;" width="17" height="16" viewBox="0 0 17 16">
<path d="M.5 12.3 Q.3 6.8 4.4 6.8 Q8.7 6.8 8.7 12.3 Z" fill="#5fa345" stroke="#1c3518" stroke-width=".9"/>
<path d="M3.4 7.2 L4.6 10.6 L5.8 7.2Z" fill="#f0f6ea"/>
<ellipse cx="4.6" cy="4.4" rx="2.7" ry="3.2" fill="#e2b98c" stroke="#5a4a30" stroke-width=".5"/>
<path d="M1.5 5 Q1 .2 4.6 .2 Q8.2 .2 7.9 4.2 Q6.8 2.2 4.5 2.5 Q2.6 2.8 2.3 5.4 Z" fill="#d9c566" stroke="#6a5c28" stroke-width=".4"/>
<path d="M6.5 15.4 Q6 9.3 11.1 9.3 Q16.3 9.3 16.1 15.4 Z" fill="#8ebeec" stroke="#182a44" stroke-width=".9"/>
<path d="M9.3 9.7 L10.6 12.8 L11.9 9.7Z" fill="#f4f8fc"/>
<ellipse cx="10.2" cy="6.4" rx="2.7" ry="3.3" fill="#c2844e" stroke="#3a2818" stroke-width=".5"/>
<path d="M7.5 6.2 Q7.2 1.9 10.6 1.9 Q14.2 1.9 13.8 7 Q13.2 4.6 10.8 4.3 Q8.6 4.1 7.5 6.2Z" fill="#26262a"/>
</svg>
<svg class="b" style="left:445px;top:628.9000000000001px;" width="17" height="16" viewBox="0 0 17 16">
<path d="M.5 12.3 Q.3 6.8 4.4 6.8 Q8.7 6.8 8.7 12.3 Z" fill="#5fa345" stroke="#1c3518" stroke-width=".9"/>
<path d="M3.4 7.2 L4.6 10.6 L5.8 7.2Z" fill="#f0f6ea"/>
<ellipse cx="4.6" cy="4.4" rx="2.7" ry="3.2" fill="#e2b98c" stroke="#5a4a30" stroke-width=".5"/>
<path d="M1.5 5 Q1 .2 4.6 .2 Q8.2 .2 7.9 4.2 Q6.8 2.2 4.5 2.5 Q2.6 2.8 2.3 5.4 Z" fill="#d9c566" stroke="#6a5c28" stroke-width=".4"/>
<path d="M6.5 15.4 Q6 9.3 11.1 9.3 Q16.3 9.3 16.1 15.4 Z" fill="#8ebeec" stroke="#182a44" stroke-width=".9"/>
<path d="M9.3 9.7 L10.6 12.8 L11.9 9.7Z" fill="#f4f8fc"/>
<ellipse cx="10.2" cy="6.4" rx="2.7" ry="3.3" fill="#c2844e" stroke="#3a2818" stroke-width=".5"/>
<path d="M7.5 6.2 Q7.2 1.9 10.6 1.9 Q14.2 1.9 13.8 7 Q13.2 4.6 10.8 4.3 Q8.6 4.1 7.5 6.2Z" fill="#26262a"/>
</svg>
</body></html>
